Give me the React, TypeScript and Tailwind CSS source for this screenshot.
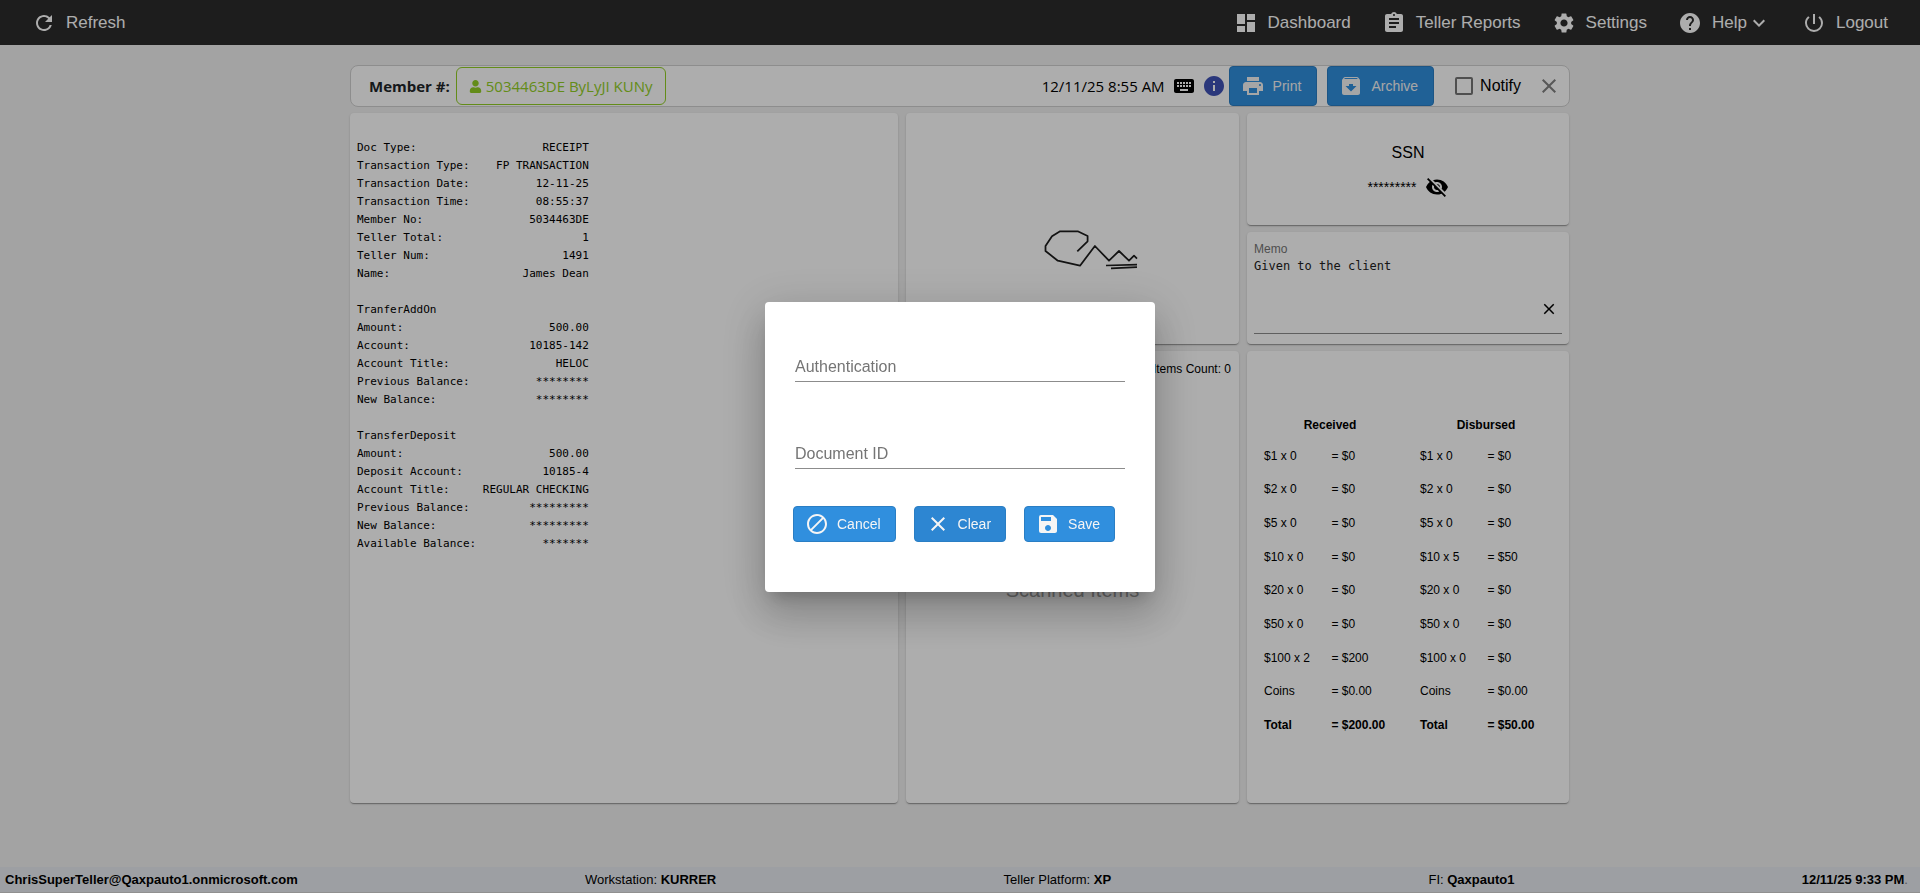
import type { ReactNode } from "react";
import { FaUser } from "react-icons/fa";
import {
  MdArchive,
  MdAssignment,
  MdBlock,
  MdClose,
  MdDashboard,
  MdExpandMore,
  MdHelp,
  MdInfo,
  MdKeyboard,
  MdPowerSettingsNew,
  MdPrint,
  MdRefresh,
  MdSave,
  MdSettings,
  MdVisibilityOff,
} from "react-icons/md";

const RECEIPT_WIDTH = 35;

const receipt: [string, string][] = [
  ["Doc Type:", "RECEIPT"],
  ["Transaction Type:", "FP TRANSACTION"],
  ["Transaction Date:", "12-11-25"],
  ["Transaction Time:", "08:55:37"],
  ["Member No:", "5034463DE"],
  ["Teller Total:", "1"],
  ["Teller Num:", "1491"],
  ["Name:", "James Dean"],
  ["", ""],
  ["TranferAddOn", ""],
  ["Amount:", "500.00"],
  ["Account:", "10185-142"],
  ["Account Title:", "HELOC"],
  ["Previous Balance:", "********"],
  ["New Balance:", "********"],
  ["", ""],
  ["TransferDeposit", ""],
  ["Amount:", "500.00"],
  ["Deposit Account:", "10185-4"],
  ["Account Title:", "REGULAR CHECKING"],
  ["Previous Balance:", "*********"],
  ["New Balance:", "*********"],
  ["Available Balance:", "*******"],
];

const receiptText = receipt
  .map(([label, value]) => label + value.padStart(RECEIPT_WIDTH - label.length))
  .join("\n");

const cash: [string, string, string, string][] = [
  ["$1 x 0", "= $0", "$1 x 0", "= $0"],
  ["$2 x 0", "= $0", "$2 x 0", "= $0"],
  ["$5 x 0", "= $0", "$5 x 0", "= $0"],
  ["$10 x 0", "= $0", "$10 x 5", "= $50"],
  ["$20 x 0", "= $0", "$20 x 0", "= $0"],
  ["$50 x 0", "= $0", "$50 x 0", "= $0"],
  ["$100 x 2", "= $200", "$100 x 0", "= $0"],
  ["Coins", "= $0.00", "Coins", "= $0.00"],
];

function NavItem({ icon, children }: { icon: ReactNode; children: ReactNode }) {
  return (
    <a href="#" className="flex items-center gap-2.5 text-[17px] leading-6 text-white">
      {icon}
      <span className="flex items-center">{children}</span>
    </a>
  );
}

function ActionButton({
  icon,
  children,
  className,
}: {
  icon: ReactNode;
  children: ReactNode;
  className: string;
}) {
  return (
    <button
      type="button"
      className={`flex items-center gap-2 rounded border border-[#2a7ec4] pl-[11px] text-sm text-[#f5f5f5] ${className}`}
    >
      {icon}
      {children}
    </button>
  );
}

function Card({ className, children }: { className: string; children: ReactNode }) {
  return (
    <section
      className={`rounded bg-white shadow-[0_2px_1px_-1px_rgba(0,0,0,0.2),0_1px_1px_0_rgba(0,0,0,0.14),0_1px_3px_0_rgba(0,0,0,0.12)] ${className}`}
    >
      {children}
    </section>
  );
}

function Header() {
  return (
    <header className="flex h-[45px] items-center justify-between bg-[#2c2c2c] px-8">
      <NavItem icon={<MdRefresh size={24} />}>Refresh</NavItem>
      <nav className="flex items-center gap-[31px]">
        <NavItem icon={<MdDashboard size={24} />}>Dashboard</NavItem>
        <NavItem icon={<MdAssignment size={24} />}>Teller Reports</NavItem>
        <NavItem icon={<MdSettings size={24} />}>Settings</NavItem>
        <NavItem icon={<MdHelp size={24} />}>
          Help
          <MdExpandMore size={24} stroke="currentColor" />
        </NavItem>
        <NavItem icon={<MdPowerSettingsNew size={24} />}>Logout</NavItem>
      </nav>
    </header>
  );
}

function Toolbar() {
  return (
    <div className="flex h-[42px] items-center justify-between rounded-lg border border-[#d0d0d0] bg-white pl-[18px] pr-2">
      <div className="flex items-center gap-1.5">
        <span className="font-['Open_Sans','Noto_Sans',sans-serif] text-[15px] font-bold text-[#212529]">
          Member #:
        </span>
        <button
          type="button"
          className="flex h-[38px] items-center gap-1 rounded-md border border-[#92cf26] px-3 font-['Open_Sans','Noto_Sans',sans-serif] text-[15px] text-[#92cf26]"
        >
          <FaUser size={13} />
          5034463DE ByLyJI KUNy
        </button>
      </div>
      <div className="flex items-center">
        <span className="mr-[7px] font-['Open_Sans','Noto_Sans',sans-serif] text-[15px] text-black">
          12/11/25 8:55 AM
        </span>
        <MdKeyboard size={24} />
        <MdInfo size={24} className="mr-[3px] ml-1.5 text-[#3f51b5]" />
        <ActionButton icon={<MdPrint size={24} />} className="mr-2.5 h-10 bg-[#308fde] pr-[15px]">
          Print
        </ActionButton>
        <ActionButton icon={<MdArchive size={24} />} className="h-10 bg-[#308fde] pr-[15px]">
          Archive
        </ActionButton>
        <label className="ml-[21px] flex items-center gap-[7px] text-base text-black">
          <input
            type="checkbox"
            className="size-[18px] appearance-none rounded-xs border-2 border-[#757575] bg-white"
          />
          Notify
        </label>
        <button type="button" aria-label="Close" className="ml-4 text-[#808080]">
          <MdClose size={24} />
        </button>
      </div>
    </div>
  );
}

function Signature() {
  return (
    <svg
      width="130"
      height="84"
      viewBox="0 0 130 84"
      fill="none"
      stroke="#1c1c1c"
      strokeWidth="1.75"
      strokeLinejoin="round"
    >
      <path d="M69.3 64.3 79.6 54.3V49L69.7 44.3H52.1L44 49.3 37.5 59V64L49.8 73.7 72 78.7 86.9 59 101 73.7 111 64 121 73.7 126 68.7 129 71.7" />
      <path d="M98 78.5 129 77.7M103 81.3 129 80.2" />
    </svg>
  );
}

function CashTable() {
  return (
    <table className="h-[331px] w-full table-fixed text-left text-xs text-black">
      <colgroup>
        <col className="w-[67px]" />
        <col className="w-[88px]" />
        <col className="w-[67px]" />
        <col className="w-[88px]" />
      </colgroup>
      <thead>
        <tr className="h-7">
          <th colSpan={2} className="text-center">
            Received
          </th>
          <th colSpan={2} className="text-center">
            Disbursed
          </th>
        </tr>
      </thead>
      <tbody>
        {cash.map((row) => (
          <tr key={row[0]} className="h-[33px]">
            {row.map((cell, i) => (
              <td key={i} className="pl-3 whitespace-nowrap">
                {cell}
              </td>
            ))}
          </tr>
        ))}
        <tr className="h-[33px] font-bold">
          <td className="pl-3">Total</td>
          <td className="pl-3">= $200.00</td>
          <td className="pl-3">Total</td>
          <td className="pl-3">= $50.00</td>
        </tr>
      </tbody>
    </table>
  );
}

function Footer() {
  return (
    <footer className="flex h-[26px] items-center justify-between border-b border-[#d4d4d4] bg-[#e8ebf0] pr-3 pl-[5px] text-[13px] text-black">
      <b>ChrisSuperTeller@Qaxpauto1.onmicrosoft.com</b>
      <span>
        Workstation: <b>KURRER</b>
      </span>
      <span className="pr-[30px]">
        Teller Platform: <b>XP</b>
      </span>
      <span>
        FI: <b>Qaxpauto1</b>
      </span>
      <span>
        <b>12/11/25 9:33 PM</b>
        <span className="text-[#808080]">.</span>
      </span>
    </footer>
  );
}

function AuthDialog() {
  return (
    <div className="fixed inset-0 flex items-center justify-center bg-black/32">
      <form
        role="dialog"
        aria-modal="true"
        className="w-[390px] rounded bg-white px-7 pt-[50px] pb-[50px] shadow-[0_11px_15px_-7px_rgba(0,0,0,0.2),0_24px_38px_3px_rgba(0,0,0,0.14),0_9px_46px_8px_rgba(0,0,0,0.12)]"
      >
        <div className="mx-0.5 flex flex-col gap-[57px]">
          {["Authentication", "Document ID"].map((name) => (
            <input
              key={name}
              type="text"
              aria-label={name}
              placeholder={name}
              className="h-[30px] w-full border-b border-[#8c8c8c] pt-0.5 text-base text-black outline-none placeholder:text-[#757575]"
            />
          ))}
        </div>
        <div className="mt-[37px] flex gap-[18px]">
          <ActionButton icon={<MdBlock size={24} />} className="h-9 bg-[#308fde] pr-3.5">
            Cancel
          </ActionButton>
          <ActionButton icon={<MdClose size={24} />} className="h-9 bg-[#2d86d2] pr-3.5">
            Clear
          </ActionButton>
          <ActionButton icon={<MdSave size={24} />} className="h-9 bg-[#308fde] pr-3.5">
            Save
          </ActionButton>
        </div>
      </form>
    </div>
  );
}

export default function App() {
  return (
    <div className="flex min-h-screen flex-col bg-[#f1f1f1] font-['Liberation_Sans',Arial,sans-serif]">
      <Header />
      <main className="mx-auto w-full max-w-[1220px] flex-1 pt-5">
        <Toolbar />
        <div className="mt-1.5 mr-px grid grid-cols-[548fr_333fr_322fr] gap-x-2 gap-y-[7px]">
          <Card className="row-span-3 px-[7px] pt-[26px]">
            <pre className="font-['DejaVu_Sans_Mono',monospace] text-[11px] leading-[18px] text-black">
              {receiptText}
            </pre>
          </Card>

          <Card className="row-span-2 flex items-center justify-center">
            <Signature />
          </Card>

          <Card className="flex min-h-28 flex-col items-center gap-2.5 pt-7 text-black">
            <h2 className="text-base leading-6">SSN</h2>
            <div className="flex items-center gap-2">
              <span className="text-sm">*********</span>
              <button type="button" aria-label="Show SSN">
                <MdVisibilityOff size={24} />
              </button>
            </div>
          </Card>

          <Card className="relative col-start-3 row-start-2 min-h-28 px-[7px] pt-[9px]">
            <label htmlFor="memo" className="block text-xs text-[#757575]">
              Memo
            </label>
            <textarea
              id="memo"
              defaultValue="Given to the client"
              className="block h-[77px] w-full resize-none border-b border-[#8c8c8c] font-['DejaVu_Sans_Mono',monospace] text-xs leading-[18px] text-[#212121] outline-none"
            />
            <button type="button" aria-label="Clear memo" className="absolute right-[11px] bottom-[26px] text-black">
              <MdClose size={18} />
            </button>
          </Card>

          <Card className="flex flex-col px-2 pt-[9px] pb-0.5">
            <p className="text-right text-xs leading-[18px] text-black">Items Count: 0</p>
            <p className="flex flex-1 items-center justify-center text-xl text-[#a0a0a0]">Scanned Items</p>
          </Card>

          <Card className="min-h-[452px] px-[5px] pt-[60px]">
            <CashTable />
          </Card>
        </div>
      </main>
      <Footer />
      <AuthDialog />
    </div>
  );
}
